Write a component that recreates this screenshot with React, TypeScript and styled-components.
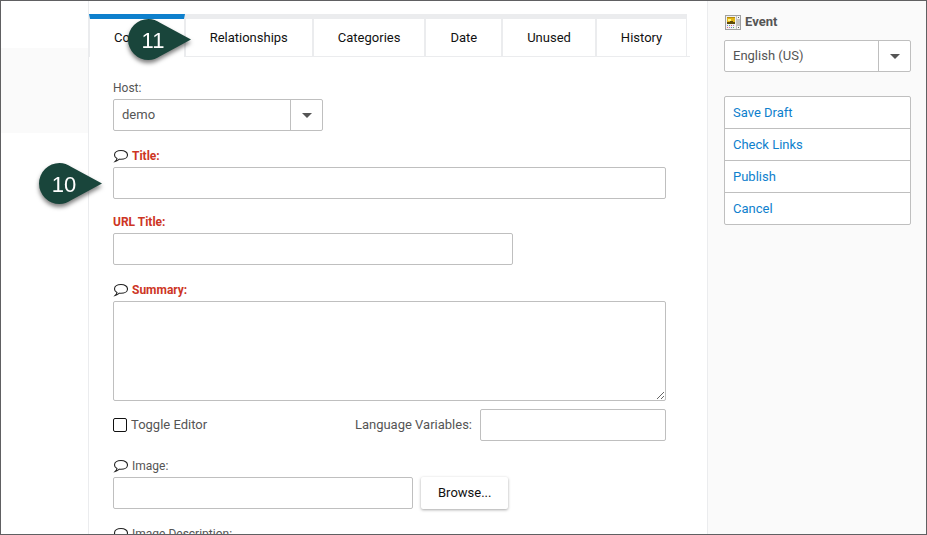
import React, { useState } from "react";
import styled, { createGlobalStyle } from "styled-components";

const line = "#ebecee";
const edge = "#bfbfbf";
const text = "#555555";
const blue = "#0e80cd";

const GlobalStyle = createGlobalStyle`
  *, *::before, *::after { box-sizing: border-box; }
  body {
    margin: 0;
    font-family: Roboto, "Liberation Sans", sans-serif;
    font-size: 13px;
    color: ${text};
    background: #ffffff;
  }
  input, select, textarea, button { font: inherit; color: inherit; }
`;

const Frame = styled.div`
  display: grid;
  grid-template-columns: 87px minmax(0, 1fr) 219px;
  height: 100vh;
  overflow: hidden;
  border: 1px solid #606062;
`;

const Rail = styled.div`
  padding-top: 47px;
`;

const RailBlock = styled.div`
  height: 85px;
  background: #fafafa;
`;

const Main = styled.main`
  min-width: 0;
  padding: 13px 17px 0 0;
  border-left: 1px solid ${line};
`;

const TabBar = styled.div`
  display: flex;
  border-bottom: 1px solid ${line};
`;

const Tab = styled.button<{ $active?: boolean }>`
  position: relative;
  height: ${(p) => (p.$active ? 43 : 42)}px;
  margin: 0 0 ${(p) => (p.$active ? -1 : 0)}px;
  padding: 0 24px;
  border: 1px solid ${line};
  border-top: 5px solid ${(p) => (p.$active ? blue : line)};
  border-bottom: 0;
  background: #ffffff;
  color: #111111;
  line-height: 20px;
  white-space: nowrap;
`;

const Form = styled.form`
  display: flex;
  flex-direction: column;
  gap: 16px;
  padding: 24px;
`;

const Field = styled.div`
  display: flex;
  flex-direction: column;
  align-items: flex-start;
`;

const Label = styled.label<{ $required?: boolean; $hint?: boolean }>`
  display: flex;
  align-items: center;
  gap: 4px;
  margin-bottom: ${(p) => (p.$hint ? 2 : 4)}px;
  font-size: 12px;
  line-height: ${(p) => (p.$hint ? 18 : 14)}px;
  font-weight: ${(p) => (p.$required ? 700 : 400)};
  color: ${(p) => (p.$required ? "#cd3524" : text)};
`;

const TextInput = styled.input<{ $width: number }>`
  width: ${(p) => (p.$width ? p.$width + "px" : "100%")};
  max-width: 100%;
  height: 32px;
  padding: 0 8px;
  border: 1px solid ${edge};
  border-radius: 2px;
  background: #ffffff;
`;

const TextArea = styled.textarea`
  display: block;
  width: 100%;
  height: 100px;
  padding: 8px;
  border: 1px solid ${edge};
  border-radius: 2px;
  background: #ffffff;
  resize: both;
`;

const SelectBox = styled.div<{ $width: number }>`
  display: grid;
  grid-template-columns: minmax(0, 1fr) 32px;
  width: ${(p) => (p.$width ? p.$width + "px" : "100%")};
  height: 32px;
  border: 1px solid ${edge};
  border-radius: 2px;
  background: #ffffff;
`;

const Select = styled.select`
  grid-area: 1 / 1 / 2 / 3;
  padding: 0 40px 2px 8px;
  border: 0;
  background: transparent;
  appearance: none;
`;

const SelectArrow = styled.span`
  grid-area: 1 / 2;
  display: flex;
  align-items: center;
  justify-content: center;
  border-left: 1px solid ${edge};
  pointer-events: none;
`;

const ToolRow = styled.div`
  display: flex;
  align-items: center;
  justify-content: space-between;
  margin-top: -8px;
`;

const InlineLabel = styled.label<{ $gap: number }>`
  display: flex;
  align-items: center;
  gap: ${(p) => p.$gap}px;
  line-height: 16px;
`;

const CheckBox = styled.input`
  width: 14px;
  height: 14px;
  margin: 0;
  border: 1px solid #111111;
  border-radius: 2px;
  background: #ffffff;
  appearance: none;
  &:checked { background: #111111; box-shadow: inset 0 0 0 2px #ffffff; }
`;

const BrowseRow = styled.div`
  display: flex;
  gap: 8px;
`;

const BrowseButton = styled.button`
  height: 32px;
  padding: 0 17px 2px;
  border: 0;
  border-radius: 2px;
  background: #ffffff;
  color: #111111;
  box-shadow: 0 1px 3px rgba(0, 0, 0, 0.35);
`;

const Side = styled.aside`
  padding: 11px 15px 0 16px;
  border-left: 1px solid ${line};
  background: #fafafa;
`;

const SideTitle = styled.h2`
  display: flex;
  align-items: center;
  gap: 4px;
  margin: 0 0 8px;
  font-size: 13px;
  line-height: 20px;
  font-weight: 700;
`;

const Actions = styled.nav`
  display: flex;
  flex-direction: column;
  margin-top: 24px;
  border: 1px solid ${edge};
  border-radius: 2px;
  background: #ffffff;
`;

const Action = styled.a`
  height: 32px;
  padding: 0 8px;
  line-height: 32px;
  color: ${blue};
  text-decoration: none;
  & + & { border-top: 1px solid ${edge}; }
  &:first-child { height: 31px; }
`;

const CalloutBox = styled.div<{ $left: number; $top: number }>`
  position: absolute;
  z-index: 2;
  left: ${(p) => p.$left}px;
  top: ${(p) => p.$top}px;
  display: grid;
  width: 63px;
  height: 41px;
  pointer-events: none;
  filter: drop-shadow(0 3px 2px rgba(0, 0, 0, 0.5));
  svg { grid-area: 1 / 1; }
`;

const CalloutNumber = styled.span`
  grid-area: 1 / 1;
  z-index: 1;
  width: 50px;
  font-family: "Liberation Sans", Arial, sans-serif;
  font-size: 22px;
  line-height: 43px;
  text-align: center;
  color: #ffffff;
`;

const Callout = ({ n, left, top }: { n: number; left: number; top: number }) => (
  <CalloutBox $left={left} $top={top}>
    <svg width="63" height="41" viewBox="0 0 63 41" aria-hidden="true">
      <path d="M63 20.5 L32 37.2 C28.5 39.6 25 41 20.5 41 A20.5 20.5 0 0 1 20.5 0 C25 0 28.5 1.4 32 3.8 Z" fill="#19453b" />
    </svg>
    <CalloutNumber>{n}</CalloutNumber>
  </CalloutBox>
);

const HintIcon = () => (
  <svg width="15" height="14" viewBox="0 0 15 14" aria-hidden="true">
    <path
      d="M4 9.5 C2.2 8.7 1.5 7.3 1.5 5.9 C1.5 3.3 4.3 1.5 8 1.5 S14.5 3.3 14.5 5.9 S11.7 10.3 8 10.3 C7.4 10.3 6.8 10.3 6.3 10.2 C5.2 11.3 3.8 12.2 2.2 12.5 C3.2 11.6 3.9 10.7 4 9.5 Z"
      fill="#ffffff"
      stroke="#222222"
      strokeWidth="1.1"
    />
  </svg>
);

const Caret = () => (
  <svg width="10" height="5" viewBox="0 0 10 5" aria-hidden="true">
    <path d="M0 0 H10 L5 5 Z" fill="#555555" />
  </svg>
);

const EventIcon = () => (
  <svg width="17" height="18" viewBox="0 0 17 18" aria-hidden="true">
    <g transform="translate(1 2)">
      <rect x="0.5" y="0.5" width="15" height="14" fill="#f1f1f1" stroke="#a0a0a0" />
      <rect x="2" y="2" width="8" height="7" fill="#e0b416" />
      <path d="M2 2 H10 V3 H2 Z" fill="#b58a08" />
      <rect x="3" y="4" width="3" height="2" fill="#fff27a" />
      <path d="M2 7 H5 V6 H8 V7 H10 V9 H2 Z" fill="#5c4a08" />
      <path d="M2 10 H3 V11 H2 Z M6 12 H7 V13 H6 Z" fill="#6a7be0" />
      <path d="M4 10 H5 V11 H4 Z M8 12 H9 V13 H8 Z" fill="#5fb565" />
      <path d="M6 10 H7 V11 H6 Z M2 12 H3 V13 H2 Z" fill="#e0726b" />
      <path d="M8 10 H9 V11 H8 Z M4 12 H5 V13 H4 Z" fill="#b07bd0" />
      <rect x="11" y="1" width="4" height="13" fill="#c4c4c4" />
      <rect x="12" y="1" width="3" height="3" fill="#f4f4f4" />
      <rect x="12" y="11" width="3" height="3" fill="#f4f4f4" />
      <path d="M13 2 H14 V3 H13 Z M13 12 H14 V13 H13 Z" fill="#666666" />
    </g>
  </svg>
);

const tabs = ["Content", "Relationships", "Categories", "Date", "Unused", "History"];
const actions = ["Save Draft", "Check Links", "Publish", "Cancel"];

interface DropDownProps {
  id: string;
  value: string;
  width?: number;
  label?: string;
}

const DropDown = ({ id, value, width = 0, label }: DropDownProps) => (
  <SelectBox $width={width}>
    <Select id={id} aria-label={label} defaultValue={value}>
      <option>{value}</option>
    </Select>
    <SelectArrow><Caret /></SelectArrow>
  </SelectBox>
);

interface TextFieldProps {
  id: string;
  label: string;
  width?: number;
  required?: boolean;
  hint?: boolean;
  children?: React.ReactNode;
}

const TextField = ({ id, label, width = 0, required, hint, children }: TextFieldProps) => (
  <Field>
    <Label htmlFor={id} $required={required} $hint={hint}>
      {hint && <HintIcon />}
      {label}
    </Label>
    {children ?? <TextInput id={id} type="text" $width={width} />}
  </Field>
);

export default function App() {
  const [active, setActive] = useState("Content");
  return (
    <>
      <GlobalStyle />
      <Frame>
        <Rail><RailBlock /></Rail>
        <Main>
          <TabBar role="tablist">
            {tabs.map((t) => (
              <Tab key={t} type="button" role="tab" aria-selected={t === active} $active={t === active} onClick={() => setActive(t)}>
                {t}
              </Tab>
            ))}
          </TabBar>
          <Form>
            <TextField id="host" label="Host:">
              <DropDown id="host" value="demo" width={210} />
            </TextField>
            <TextField id="title" label="Title:" required hint />
            <TextField id="url-title" label="URL Title:" required width={400} />
            <TextField id="summary" label="Summary:" required hint>
              <TextArea id="summary" />
            </TextField>
            <ToolRow>
              <InlineLabel $gap={4}>
                <CheckBox type="checkbox" />
                Toggle Editor
              </InlineLabel>
              <InlineLabel $gap={8}>
                Language Variables:
                <TextInput type="text" $width={186} />
              </InlineLabel>
            </ToolRow>
            <TextField id="image" label="Image:" hint>
              <BrowseRow>
                <TextInput id="image" type="text" $width={300} />
                <BrowseButton type="button">Browse...</BrowseButton>
              </BrowseRow>
            </TextField>
            <TextField id="image-description" label="Image Description:" hint />
          </Form>
        </Main>
        <Side>
          <SideTitle><EventIcon />Event</SideTitle>
          <DropDown id="language" value="English (US)" label="Language" />
          <Actions>
            {actions.map((a) => <Action key={a} href="#">{a}</Action>)}
          </Actions>
        </Side>
      </Frame>
      <Callout n={10} left={39} top={163} />
      <Callout n={11} left={128} top={19} />
    </>
  );
}
